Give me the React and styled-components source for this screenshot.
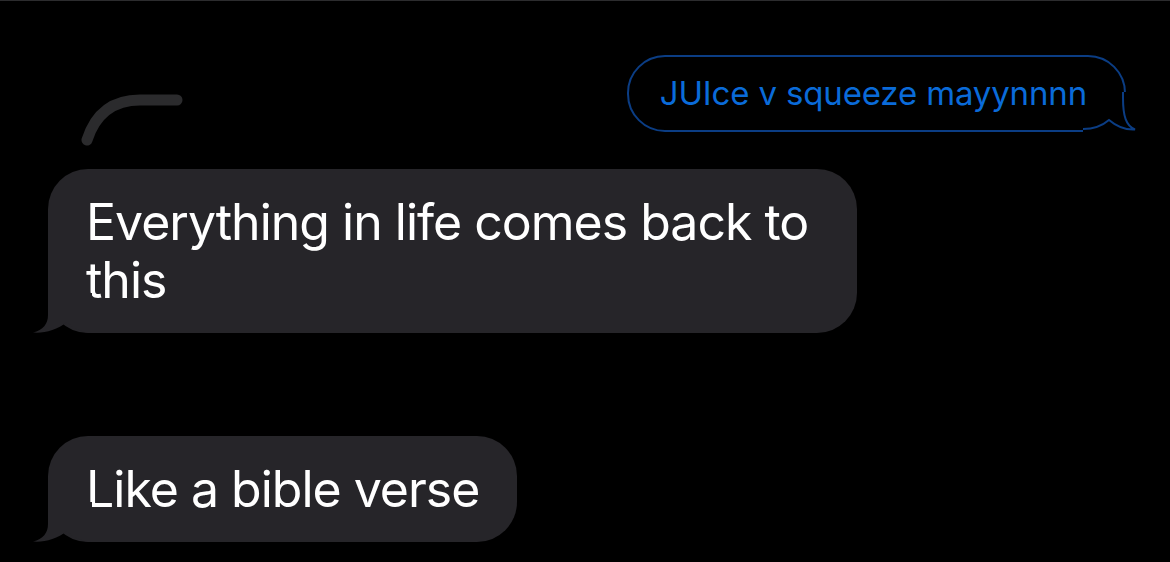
import React from "react";
import styled, { createGlobalStyle } from "styled-components";

const GlobalStyle = createGlobalStyle`
  * { box-sizing: border-box; }
  html, body {
    margin: 0;
    background: #000;
  }
  body {
    font-family: Inter, "Noto Sans", sans-serif;
    -webkit-font-smoothing: antialiased;
  }
`;

const Screen = styled.div`
  display: flex;
  flex-direction: column;
  width: 1170px;
  height: 562px;
  overflow: hidden;
  background: #000;
  border-top: 1px solid #2c2c2e;
  padding: 54px 44px 0 48px;
`;

const Header = styled.div`
  display: flex;
  justify-content: space-between;
`;

const ReplyLine = styled.svg`
  align-self: flex-end;
  margin: 35px 0 0 28px;
  display: block;
`;

const SentBubble = styled.div`
  position: relative;
  align-self: flex-start;
  border: 2px solid #0b3d84;
  border-radius: 38px;
  padding: 18px 37px 19px 31px;
  color: #0a6bd9;
  font-size: 33px;
  line-height: 36px;
  letter-spacing: -0.15px;
  white-space: nowrap;
`;

const SentTail = styled.svg`
  position: absolute;
  right: -15px;
  bottom: -4px;
  overflow: visible;
`;

const Received = styled.div`
  position: relative;
  align-self: flex-start;
  max-width: 809px;
  margin-top: ${(p) => p.$gap}px;
  background: #262529;
  border-radius: 40px;
  padding: 24px 38px;
  color: #fff;
  font-size: 50px;
  line-height: 58px;
  letter-spacing: -1px;
`;

const ReceivedTail = styled.svg`
  position: absolute;
  left: -16px;
  bottom: 0;
`;

const Bubble = ({ gap, children }) => (
  <Received $gap={gap}>
    {children}
    <ReceivedTail width="60" height="40" viewBox="0 0 60 40">
      <path
        d="M16 0 L16 22 C16 31 11 37 1 39.5 C12 40.5 25 37 35 29 C41 35 50 40 60 40 L60 0 Z"
        fill="#262529"
      />
    </ReceivedTail>
  </Received>
);

export default function App() {
  return (
    <>
      <GlobalStyle />
      <Screen>
        <Header>
          <ReplyLine width="110" height="56" viewBox="0 0 110 56">
            <path
              d="M11 50 C19 25 36 10 64 10 L101 10"
              fill="none"
              stroke="#2b2b2d"
              strokeWidth="11"
              strokeLinecap="round"
            />
          </ReplyLine>
          <SentBubble>
            JUIce v squeeze mayynnnn
            <SentTail width="60" height="40" viewBox="0 0 60 40">
              {/* hide the rounded corner's border, keep the inside clear for the text */}
              <path
                d="M7 33 A35 35 0 0 0 42 -2 L60 -2 L60 42 L4 42 L4 33 Z"
                fill="#000"
              />
              <path
                d="M44 -2 L44 4 C44 22 47 32 56 35.5 C47 36 37 32 30 26 C23 32 15 35 4 35"
                fill="none"
                stroke="#0b3d84"
                strokeWidth="2"
              />
            </SentTail>
          </SentBubble>
        </Header>
        <Bubble gap={23}>Everything in life comes back to this</Bubble>
        <Bubble gap={103}>Like a bible verse</Bubble>
      </Screen>
    </>
  );
}
